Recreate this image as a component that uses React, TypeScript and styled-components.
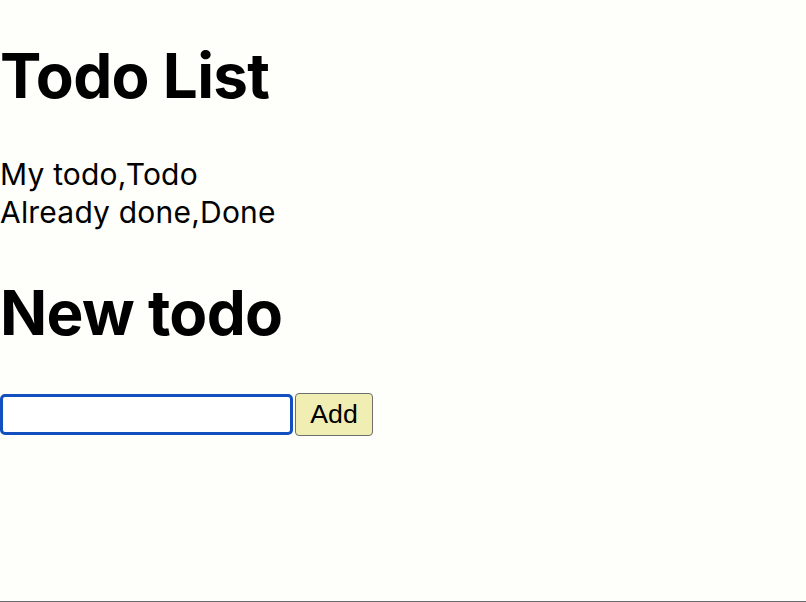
import React, { useState } from "react";
import styled, { createGlobalStyle } from "styled-components";

const Global = createGlobalStyle`
  html, body {
    margin: 0;
    padding: 0;
    background: #fefefa;
  }
  body {
    font-family: Inter, "Noto Sans", sans-serif;
    font-size: 30px;
    color: #000;
  }
`;

const Page = styled.div`
  box-sizing: border-box;
  min-height: 602px;
  border-bottom: 1px solid #6a6a6a;
  display: flex;
  flex-direction: column;
  align-items: flex-start;
  padding-top: 38px;
`;

const Heading = styled.h1`
  font-family: Inter, "Noto Sans", sans-serif;
  font-size: 62px;
  font-weight: 700;
  line-height: 75px;
  margin: 0 0 42px 0;
  letter-spacing: -0.7px;
`;

const SubHeading = styled.h2`
  font-family: Inter, "Noto Sans", sans-serif;
  font-size: 62px;
  font-weight: 700;
  line-height: 75px;
  margin: 44px 0 43px 0;
  letter-spacing: -0.7px;
`;

const List = styled.div`
  display: flex;
  flex-direction: column;
`;

const Item = styled.div`
  font-size: 30px;
  line-height: 38px;
  letter-spacing: 0.2px;
`;

const Form = styled.form`
  display: flex;
  align-items: center;
  gap: 2px;
`;

const TextInput = styled.input`
  box-sizing: border-box;
  width: 293px;
  height: 41px;
  border: 3px solid #1250c0;
  border-radius: 5px;
  background: #fff;
  outline: none;
  padding: 2px 6px;
  font-size: 26px;
  font-family: "Liberation Sans", Arial, sans-serif;
`;

const Button = styled.button`
  box-sizing: border-box;
  width: 78px;
  height: 43px;
  border: 1.5px solid #6e6e6e;
  border-radius: 4px;
  background: #f0eeb2;
  font-family: "Liberation Sans", Arial, sans-serif;
  font-size: 26.67px;
  color: #000;
  padding: 0 12px;
  cursor: pointer;
`;

type Todo = { title: string; status: string };

export default function App() {
  const [todos, setTodos] = useState<Todo[]>([
    { title: "My todo", status: "Todo" },
    { title: "Already done", status: "Done" },
  ]);
  const [text, setText] = useState("");

  return (
    <>
      <Global />
      <Page>
        <Heading>Todo List</Heading>
        <List>
          {todos.map((t, i) => (
            <Item key={i}>
              {t.title},{t.status}
            </Item>
          ))}
        </List>
        <SubHeading>New todo</SubHeading>
        <Form
          onSubmit={(e) => {
            e.preventDefault();
            if (text.trim()) {
              setTodos([...todos, { title: text, status: "Todo" }]);
              setText("");
            }
          }}
        >
          <TextInput
            autoFocus
            value={text}
            onChange={(e) => setText(e.target.value)}
          />
          <Button type="submit">Add</Button>
        </Form>
      </Page>
    </>
  );
}
